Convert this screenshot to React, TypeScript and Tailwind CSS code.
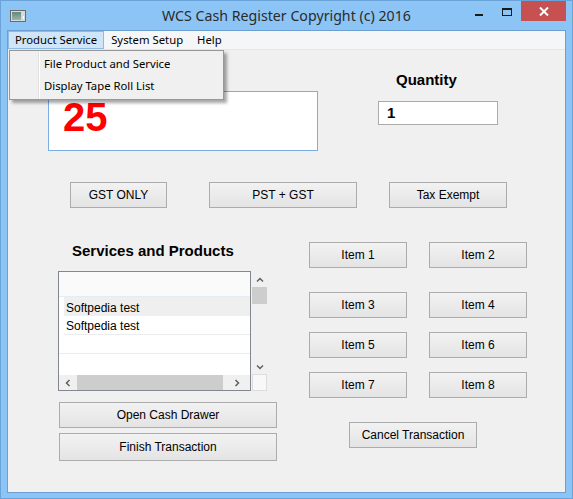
import React from "react"

// WCS Cash Register main window, Windows 8 style frame around a Swing form

const btn =
  "flex items-center justify-center border border-[#acacac] bg-linear-to-b from-[#f2f2f2] to-[#e4e4e4] text-[12px] leading-none text-black"

function Chevron({ dir }: { dir: "up" | "down" | "left" | "right" }) {
  const rot = { up: 0, right: 90, down: 180, left: 270 }[dir]
  return (
    <svg width="8" height="8" viewBox="0 0 8 8" style={{ transform: `rotate(${rot}deg)` }}>
      <path d="M1 5.5 L4 2.5 L7 5.5" fill="none" stroke="#606060" strokeWidth="1.5" />
    </svg>
  )
}

function TitleBar() {
  return (
    <div className="relative flex h-[29px] items-start">
      {/* app icon */}
      <div className="ml-[9px] mt-[9px] flex h-[12px] w-[16px] items-center border border-[#6b6b6b] bg-[#d8dcd8]">
        <div className="ml-[1px] h-[8px] w-[9px] bg-linear-to-b from-[#5f8a84] to-[#9bb3b0]" />
        <div className="ml-[2px] mt-[3px] h-[3px] w-[1px] bg-white" />
      </div>
      <div className="absolute left-0 right-0 top-[4px] text-center font-['Noto_Sans'] text-[14.2px] leading-[22px] text-[#2b2b2b]">
        WCS Cash Register Copyright (c) 2016
      </div>
      <div className="ml-auto flex items-start">
        <div className="mt-[13px] h-[2px] w-[8px] bg-[#1a1a1a]" />
        <div className="ml-[19px] mt-[7px] h-[8px] w-[10px] border border-t-2 border-[#1a1a1a]" />
        <div className="ml-[9px] flex h-[20px] w-[45px] items-center justify-center bg-[#c75050]">
          <svg width="10" height="9" viewBox="0 0 10 9">
            <path d="M1 0.5 L9 8.5 M9 0.5 L1 8.5" stroke="#fff" strokeWidth="2" />
          </svg>
        </div>
        <div className="w-[6px]" />
      </div>
    </div>
  )
}

function MenuBar() {
  return (
    <div className="flex h-[19px] items-stretch border-b border-[#e6e6e6] bg-[#f5f6f7] font-['Noto_Sans'] text-[11.3px] text-black">
      <div className="flex items-center border border-[#8ebbe6] bg-[#d0e5f8] pl-[6px] pr-[6px]">Product Service</div>
      <div className="flex items-center pl-[7px]">System Setup</div>
      <div className="flex items-center pl-[14px]">Help</div>
    </div>
  )
}

function DropMenu() {
  return (
    <div className="absolute left-[1px] top-0 z-10 flex h-[50px] w-[215px] border border-[#979797] bg-[#f0f0f0] font-['Noto_Sans'] text-[11.3px] text-black shadow-[3px_3px_3px_rgba(0,0,0,0.35)]">
      <div className="w-[29px] border-r border-[#e0e0e0]" />
      <div className="border-l border-white pl-[4px] pt-[2px]">
        <div className="leading-[22px]">File Product and Service</div>
        <div className="leading-[22px]">Display Tape Roll List</div>
      </div>
    </div>
  )
}

function ListBox() {
  return (
    <div className="mt-[11px] flex">
      <div className="flex h-[120px] w-[193px] flex-col border border-[#828790] bg-white text-[12px] text-black">
        <div className="h-[25px] border-b border-[#e3ebf5] bg-[#fafafa]" />
        <div className="ml-[5px] flex h-[19px] items-center bg-[#efefef] pl-[2px] pt-[2px]">Softpedia test</div>
        <div className="ml-[5px] flex h-[19px] items-center border-b border-[#ececec] pl-[2px] pt-[2px]">Softpedia test</div>
        <div className="h-[19px] border-b border-[#ececec]" />
        <div className="flex-1" />
        {/* horizontal scrollbar */}
        <div className="flex h-[15px] items-center bg-[#f0f0f0]">
          <div className="flex w-[18px] justify-center">
            <Chevron dir="left" />
          </div>
          <div className="h-full w-[146px] bg-[#cdcdcd]" />
          <div className="flex flex-1 justify-center">
            <Chevron dir="right" />
          </div>
        </div>
      </div>
      {/* vertical scrollbar sitting outside the list */}
      <div className="ml-[1px] flex h-[120px] w-[15px] flex-col">
        <div className="flex h-[16px] items-center justify-center pt-[2px]">
          <Chevron dir="up" />
        </div>
        <div className="h-[17px] bg-[#cdcdcd]" />
        <div className="flex-1" />
        <div className="flex h-[14px] items-center justify-center">
          <Chevron dir="down" />
        </div>
        <div className="h-[17px] border border-[#dcdcdc] bg-[#f8f8f8]" />
      </div>
    </div>
  )
}

export default function App() {
  const items = ["Item 1", "Item 2", "Item 3", "Item 4", "Item 5", "Item 6", "Item 7", "Item 8"]

  return (
    <div className="flex h-[499px] w-[573px] flex-col border border-[#6aa3d8] bg-[#8cc4f5] font-['Liberation_Sans',Arial,sans-serif]">
      <TitleBar />
      <div className="mx-[6px] flex h-[463px] flex-col border border-[#6d9fd2] bg-[#f0f0f0]">
        <MenuBar />
        <div className="relative flex-1">
          <DropMenu />

          {/* amount display + quantity */}
          <div className="flex items-start">
            <div className="ml-[40px] mt-[41px] h-[60px] w-[270px] border border-[#7aaee4] bg-white pl-[14px] pt-[5px] text-[40px] font-bold leading-[40px] text-[#ff0000]">
              25
            </div>
            <div className="ml-[60px] mt-[21px] flex flex-col">
              <div className="pl-[18px] text-[15px] font-bold leading-[18px] text-black">Quantity</div>
              <div className="mt-[12px] flex h-[24px] w-[120px] items-center border border-[#ababab] bg-white pl-[8px] text-[15px] font-bold text-black">
                1
              </div>
            </div>
          </div>

          {/* tax buttons */}
          <div className="mt-[31px] flex">
            <button className={`${btn} ml-[62px] h-[26px] w-[97px]`}>GST ONLY</button>
            <button className={`${btn} ml-[42px] h-[26px] w-[148px]`}>PST + GST</button>
            <button className={`${btn} ml-[32px] h-[26px] w-[118px]`}>Tax Exempt</button>
          </div>

          <div className="mt-[34px] flex items-start">
            {/* list column */}
            <div className="ml-[50px] flex w-[219px] flex-col">
              <div className="pl-[14px] text-[15px] font-bold leading-[18px] text-black">Services and Products</div>
              <ListBox />
              <button className={`${btn} ml-[1px] mt-[11px] h-[26px] w-[218px]`}>Open Cash Drawer</button>
              <button className={`${btn} ml-[1px] mt-[5px] h-[28px] w-[218px]`}>Finish Transaction</button>
            </div>

            {/* item buttons */}
            <div className="ml-[32px] flex flex-col">
              <div className="grid grid-cols-[98px_98px] gap-x-[22px]">
                {items.map((label, i) => (
                  <button
                    key={label}
                    className={`${btn} h-[26px] ${i >= 2 && i < 4 ? "mt-[24px]" : i >= 4 ? "mt-[14px]" : ""}`}
                  >
                    {label}
                  </button>
                ))}
              </div>
              <button className={`${btn} ml-[40px] mt-[24px] h-[26px] w-[128px]`}>Cancel Transaction</button>
            </div>
          </div>
        </div>
      </div>
    </div>
  )
}
